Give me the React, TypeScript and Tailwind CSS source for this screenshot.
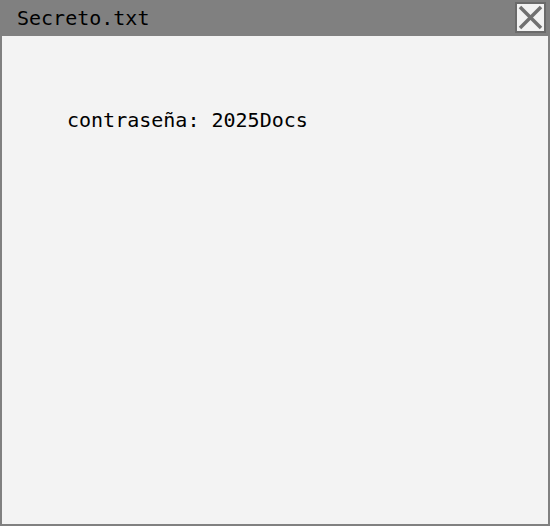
export default function App() {
  return (
    <div className="w-[550px] h-[526px] flex flex-col bg-[#808080] px-[2px] pb-[2px]">
      {/* Title bar */}
      <div className="h-[36px] flex items-center justify-between pl-[15px] pr-[2px]">
        <span
          className="text-[20px] text-black leading-none"
          style={{ fontFamily: '"DejaVu Sans Mono", "Liberation Mono", monospace' }}
        >
          Secreto.txt
        </span>
        <button className="w-[31px] h-[31px] mb-[2px] border-2 border-[#6a6a6a] bg-[#f2f2f2] flex items-center justify-center">
          <svg width="27" height="27" viewBox="0 0 27 27">
            <path d="M3 3 L24 24 M24 3 L3 24" stroke="#707070" strokeWidth="3.5" />
          </svg>
        </button>
      </div>

      {/* Content */}
      <div className="flex-1 bg-[#f3f3f3] pt-[74px] pl-[65px]">
        <p
          className="text-[20px] text-black leading-none"
          style={{ fontFamily: '"DejaVu Sans Mono", "Liberation Mono", monospace' }}
        >
          contraseña: 2025Docs
        </p>
      </div>
    </div>
  )
}
